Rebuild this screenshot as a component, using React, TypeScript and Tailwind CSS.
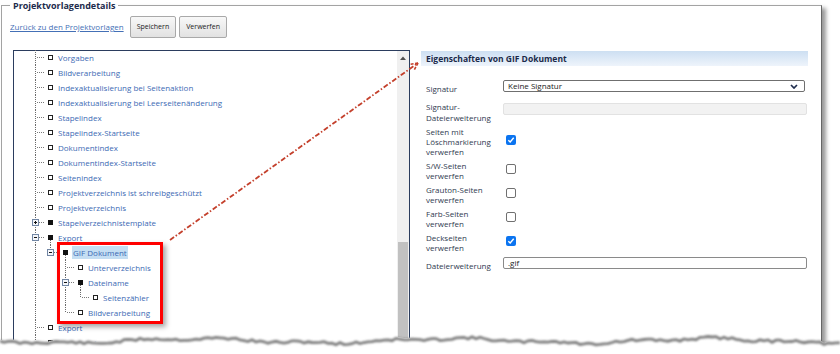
import React from "react";

type Row = {
  t: string;
  l: number;
  tg?: "plus" | "minus";
  f?: boolean;
  sel?: boolean;
  v?: [number, number, number][];
};

const rows: Row[] = [
  { t: "Vorgaben", l: 1 },
  { t: "Bildverarbeitung", l: 1 },
  { t: "Indexaktualisierung bei Seitenaktion", l: 1 },
  { t: "Indexaktualisierung bei Leerseitenänderung", l: 1 },
  { t: "Stapelindex", l: 1 },
  { t: "Stapelindex-Startseite", l: 1 },
  { t: "Dokumentindex", l: 1 },
  { t: "Dokumentindex-Startseite", l: 1 },
  { t: "Seitenindex", l: 1 },
  { t: "Projektverzeichnis ist schreibgeschützt", l: 1 },
  { t: "Projektverzeichnis", l: 1 },
  { t: "Stapelverzeichnistemplate", l: 1, tg: "plus", f: true },
  { t: "Export", l: 1, tg: "minus", f: true, v: [[36, 10, 15]] },
  { t: "GIF Dokument", l: 2, tg: "minus", f: true, sel: true, v: [[36, 0, 4], [51, 10, 15]] },
  { t: "Unterverzeichnis", l: 3, v: [[51, 0, 15]] },
  { t: "Dateiname", l: 3, tg: "minus", f: true, v: [[51, 0, 15], [66, 10, 15]] },
  { t: "Seitenzähler", l: 4, v: [[51, 0, 15], [66, 0, 7.5]] },
  { t: "Bildverarbeitung", l: 3, v: [[51, 0, 7.5]] },
  { t: "Export", l: 1 },
  { t: "Seitenzähler", l: 1 },
];

function TreeRow({ row }: { row: Row }) {
  const c = 21 + 15 * (row.l - 1);
  const w = 43 + 15 * (row.l - 1);
  const lines: [number, number, number][] = [[21, 0, 15], ...(row.v ?? [])];
  return (
    <div className="flex items-center h-[15px] shrink-0">
      <svg width={w} height={15} className="shrink-0">
        {lines.map(([x, y1, y2], i) => (
          <line key={i} x1={x + 0.5} y1={y1} x2={x + 0.5} y2={y2} stroke="#6a6a6a" strokeDasharray="1 1" />
        ))}
        <line x1={row.tg ? c + 4 : c + 2} y1={7.5} x2={c + 10} y2={7.5} stroke="#7a7a7a" strokeDasharray="1 1" />
        {row.tg && (
          <g>
            <rect x={c - 2.5} y={4.5} width={6} height={6} fill="#f4f6fa" stroke="#7186a4" />
            <rect x={c - 1} y={7} width={3} height={1} fill="#111" />
            {row.tg === "plus" && <rect x={c} y={6} width={1} height={3} fill="#111" />}
          </g>
        )}
        {row.f ? (
          <rect x={c + 13} y={5} width={5} height={5} fill="#111" />
        ) : (
          <rect x={c + 13.5} y={5.5} width={4} height={4} fill="#fff" stroke="#222" />
        )}
      </svg>
      <span
        className={
          row.sel
            ? "px-[1px] leading-[13px] bg-[#c4def3] text-[#3d6ab4] whitespace-nowrap"
            : "px-[1px] leading-[13px] text-[#3d6ab4] whitespace-nowrap"
        }
      >
        {row.t}
      </span>
    </div>
  );
}

function Check({ on }: { on?: boolean }) {
  return on ? (
    <span className="flex items-center justify-center w-[10px] h-[10px] rounded-[2px] bg-[#0b74f0]">
      <svg width="8" height="8" viewBox="0 0 8 8">
        <path d="M1.3 4.2 L3.2 6 L6.7 1.8" fill="none" stroke="#fff" strokeWidth="1.4" />
      </svg>
    </span>
  ) : (
    <span className="block w-[10px] h-[10px] rounded-[2px] border border-[#707070] bg-white" />
  );
}

const tear = (() => {
  let seed = 11;
  const rnd = () => {
    seed = (seed * 9301 + 49297) % 233280;
    return seed / 233280;
  };
  const pts: [number, number][] = [];
  for (let x = 0; x <= 840; x += 4) {
    const y = 13 + Math.sin(x / 41) * 2.2 + Math.sin(x / 13) * 1 + (rnd() - 0.5) * 2.6;
    pts.push([x, y]);
  }
  return pts;
})();

export default function App() {
  const edge = tear.map(([x, y]) => `${x},${y.toFixed(1)}`).join(" ");
  const shadow = tear.map(([x, y]) => `${x},${(y + 1.8).toFixed(1)}`).join(" ");

  // arrow from red box to the properties header
  const ax1 = 170, ay1 = 240, ax2 = 418, ay2 = 63;
  const ang = Math.atan2(ay1 - ay2, ax1 - ax2);
  const h1 = [ax2 + 8 * Math.cos(ang + 0.45), ay2 + 8 * Math.sin(ang + 0.45)];
  const h2 = [ax2 + 8 * Math.cos(ang - 0.45), ay2 + 8 * Math.sin(ang - 0.45)];

  return (
    <div className="relative w-[840px] h-[354px] overflow-hidden bg-white font-['Open_Sans',sans-serif] text-[8px]">
      <fieldset className="ml-[1px] w-[821px] h-[350px] border border-[#a3a3a3] border-r-[#666666] shadow-[4px_3px_4px_rgba(0,0,0,0.4)] pl-[8px]">
        <legend className="px-[3px] text-[9px] font-bold leading-[11px] text-[#1d2b4c]">Projektvorlagendetails</legend>

        <div className="mt-[5px] flex items-center h-[22px]">
          <a className="text-[#4470b6] underline mr-[6px]">Zurück zu den Projektvorlagen</a>
          <button className="h-[22px] px-[6px] border border-[#a9a9a9] rounded-[2px] bg-linear-to-b from-[#f8f8f8] to-[#e2e2e2] text-[7px] text-[#222] mr-[3px]">
            Speichern
          </button>
          <button className="h-[22px] px-[6px] border border-[#a9a9a9] rounded-[2px] bg-linear-to-b from-[#f8f8f8] to-[#e2e2e2] text-[7px] text-[#222]">
            Verwerfen
          </button>
        </div>

        <div className="mt-[12px] ml-[3px] flex items-start">
          {/* tree */}
          <div className="w-[397px] h-[300px] border border-[#2b3d5e] flex">
            <div className="flex-1 flex flex-col overflow-hidden -mt-[1px]">
              {rows.map((r, i) => (
                <TreeRow key={i} row={r} />
              ))}
            </div>
            <div className="w-[12px] bg-[#f0f0f0] flex flex-col items-center">
              <div className="h-[14px] flex items-center justify-center">
                <svg width="6" height="4">
                  <path d="M0 4 L3 0.5 L6 4 Z" fill="#505050" />
                </svg>
              </div>
              <div className="h-[177px]" />
              <div className="w-[10px] flex-1 bg-[#c1c1c1]" />
            </div>
          </div>

          {/* properties */}
          <div className="ml-[11px] w-[387px] mt-[1px] text-[#2f3a4f]">
            <div className="h-[15px] leading-[15px] pl-[5px] bg-linear-to-b from-[#cddff2] to-[#eef4fb] font-bold text-[8.5px] text-[#1b2a4a]">
              Eigenschaften von GIF Dokument
            </div>
            <div className="pl-[5px] pt-[14px] flex flex-col leading-[10px]">
              <div className="flex">
                <div className="w-[77px] pt-[4px]">Signatur</div>
                <div className="w-[302px] h-[12px] border border-[#6f6f6f] rounded-[2px] flex items-center justify-between pl-[4px] pr-[6px] text-[#222]">
                  <span>Keine Signatur</span>
                  <svg width="8" height="5" viewBox="0 0 8 5">
                    <path d="M1 1 L4 4 L7 1" fill="none" stroke="#1f2d4d" strokeWidth="1.7" />
                  </svg>
                </div>
              </div>
              <div className="flex mt-[7px]">
                <div className="w-[77px] leading-[11px]">
                  Signatur-
                  <br />
                  Dateierweiterung
                </div>
                <div className="pt-[2px]">
                  <div className="w-[304px] h-[12px] border border-[#e2e2e2] bg-[#f2f2f2] rounded-[2px]" />
                </div>
              </div>
              <div className="flex mt-[4px]">
                <div className="w-[77px]">
                  Seiten mit
                  <br />
                  Löschmarkierung
                  <br />
                  verwerfen
                </div>
                <div className="pt-[8px] pl-[3px]">
                  <Check on />
                </div>
              </div>
              {[
                ["S/W-Seiten", false],
                ["Grauton-Seiten", false],
                ["Farb-Seiten", false],
                ["Deckseiten", true],
              ].map(([l, on]) => (
                <div key={l as string} className="flex mt-[4px]">
                  <div className="w-[77px]">
                    {l as string}
                    <br />
                    verwerfen
                  </div>
                  <div className="pt-[3px] pl-[3px]">
                    <Check on={on as boolean} />
                  </div>
                </div>
              ))}
              <div className="flex mt-[4px]">
                <div className="w-[77px] pt-[4px]">Dateierweiterung</div>
                <div className="w-[304px] h-[12px] border border-[#8a8a8a] rounded-[2px] flex items-center pl-[4px] text-[#222]">
                  .gif
                </div>
              </div>
            </div>
          </div>
        </div>
      </fieldset>

      {/* annotation: highlight box */}
      <div className="absolute left-[57px] top-[242px] w-[106px] h-[82px] border-[3px] border-[#ff0000] shadow-[3px_3px_5px_rgba(0,0,0,0.35)]" />

      {/* annotation: arrow */}
      <svg className="absolute left-0 top-0 pointer-events-none" width="840" height="354">
        <line x1={ax1} y1={ay1} x2={ax2} y2={ay2} stroke="#c4402c" strokeWidth="1.8" strokeDasharray="5 2 1.5 2" />
        <line x1={ax2} y1={ay2} x2={h1[0]} y2={h1[1]} stroke="#c4402c" strokeWidth="1.6" strokeDasharray="3 1.5" />
        <line x1={ax2} y1={ay2} x2={h2[0]} y2={h2[1]} stroke="#c4402c" strokeWidth="1.6" strokeDasharray="3 1.5" />
      </svg>

      {/* torn paper edge */}
      <svg className="absolute left-0 top-[326px] pointer-events-none" width="840" height="28">
        <defs>
          <filter id="tb" x="-5%" y="-50%" width="110%" height="200%">
            <feGaussianBlur stdDeviation="0.9" />
          </filter>
        </defs>
        <polygon points={`${edge} 840,28 0,28`} fill="#fff" />
        <polyline points={shadow} fill="none" stroke="#7d7d7d" strokeWidth="2.8" filter="url(#tb)" />
      </svg>
    </div>
  );
}
